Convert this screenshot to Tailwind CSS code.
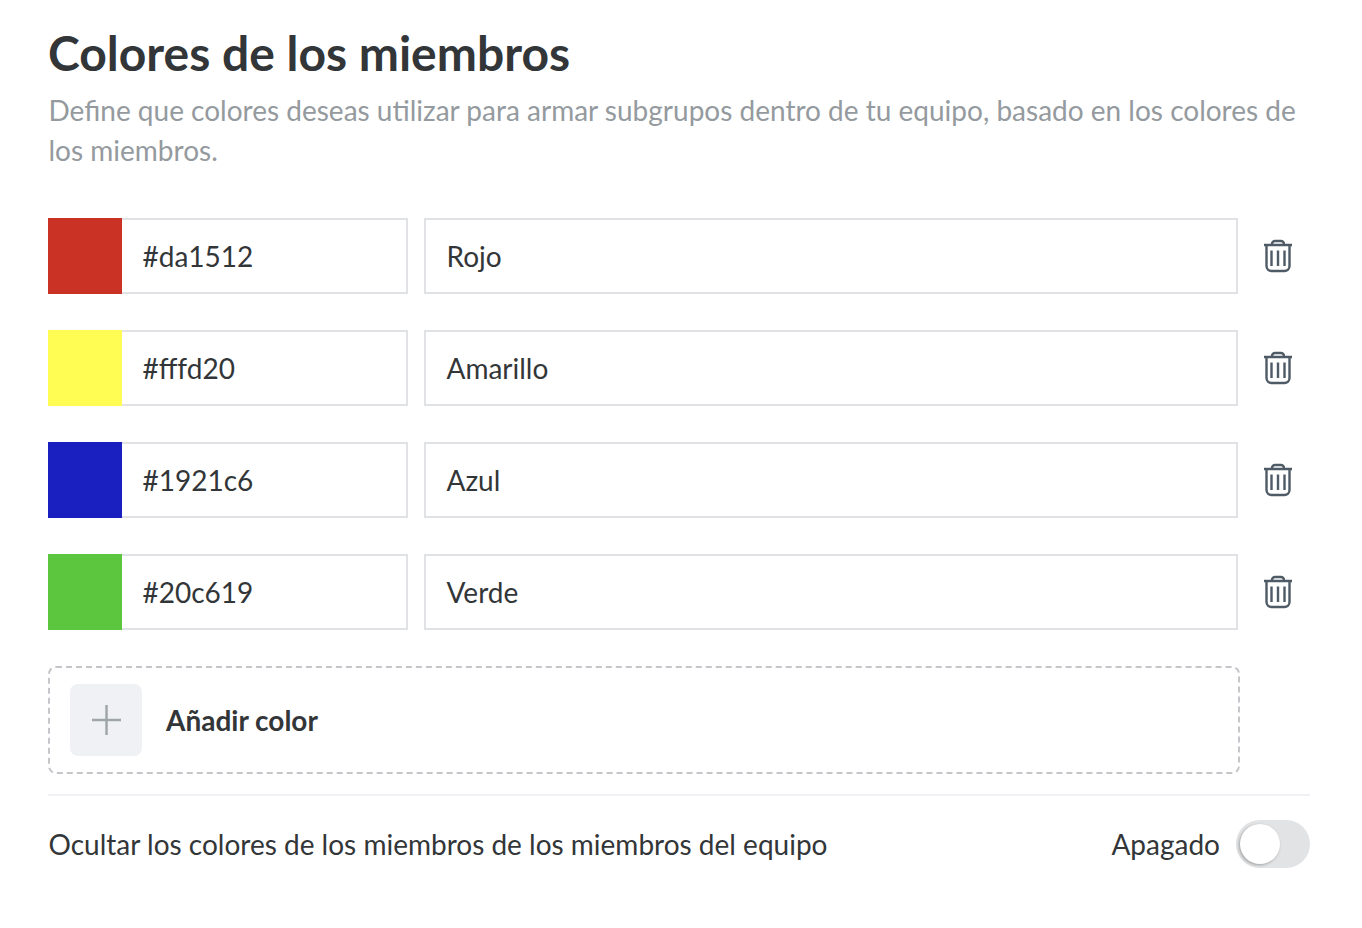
<!DOCTYPE html>
<html lang="es">

<head>
    <meta charset="UTF-8">
    <title>Colores de los miembros</title>
    <script src="https://cdn.jsdelivr.net/npm/@tailwindcss/browser@4"></script>
</head>

<body class="bg-white font-['Lato',sans-serif] text-[#333638]">
    <div class="w-[1362px] h-[928px] pl-[48px] pr-[52px] pt-[23px]">
        <h1 class="text-[48px] leading-[60px] font-bold">Colores de los miembros</h1>
        <p class="mt-[7px] pl-[0.5px] text-[28px] leading-[40px] text-[#949a9e]">Define que colores deseas utilizar para armar subgrupos dentro de tu equipo, basado en los colores de los miembros.</p>

        <div class="mt-[48px] flex flex-col gap-[36px]">
            <!-- Rojo -->
            <div class="flex items-center h-[76px]">
                <div class="w-[74px] h-[76px] bg-[#c93225]"></div>
                <div class="w-[286px] h-[76px] flex items-center pl-[20.5px] text-[28px] border-2 border-l-0 border-[#e1e2e6]">#da1512</div>
                <div class="ml-[16px] w-[814px] h-[76px] flex items-center pl-[20.5px] text-[28px] border-2 border-[#e1e2e6]">Rojo</div>
                <svg class="ml-[25px]" width="30" height="34" viewBox="0 0 30 34" fill="none" stroke="#4e5b66" stroke-width="2.400"><path d="M1 6h28M9 5.500V5a3 3 0 0 1 3-3h6a3 3 0 0 1 3 3v.5M3.500 6.500V27a5 5 0 0 0 5 5h13a5 5 0 0 0 5-5V6.500M8.500 11.500V27M15 11.500V27M21.500 11.500V27"/></svg>
            </div>
            <!-- Amarillo -->
            <div class="flex items-center h-[76px]">
                <div class="w-[74px] h-[76px] bg-[#fffd54]"></div>
                <div class="w-[286px] h-[76px] flex items-center pl-[20.5px] text-[28px] border-2 border-l-0 border-[#e1e2e6]">#fffd20</div>
                <div class="ml-[16px] w-[814px] h-[76px] flex items-center pl-[20.5px] text-[28px] border-2 border-[#e1e2e6]">Amarillo</div>
                <svg class="ml-[25px]" width="30" height="34" viewBox="0 0 30 34" fill="none" stroke="#4e5b66" stroke-width="2.400"><path d="M1 6h28M9 5.500V5a3 3 0 0 1 3-3h6a3 3 0 0 1 3 3v.5M3.500 6.500V27a5 5 0 0 0 5 5h13a5 5 0 0 0 5-5V6.500M8.500 11.500V27M15 11.500V27M21.500 11.500V27"/></svg>
            </div>
            <!-- Azul -->
            <div class="flex items-center h-[76px]">
                <div class="w-[74px] h-[76px] bg-[#1a20c0]"></div>
                <div class="w-[286px] h-[76px] flex items-center pl-[20.5px] text-[28px] border-2 border-l-0 border-[#e1e2e6]">#1921c6</div>
                <div class="ml-[16px] w-[814px] h-[76px] flex items-center pl-[20.5px] text-[28px] border-2 border-[#e1e2e6]">Azul</div>
                <svg class="ml-[25px]" width="30" height="34" viewBox="0 0 30 34" fill="none" stroke="#4e5b66" stroke-width="2.400"><path d="M1 6h28M9 5.500V5a3 3 0 0 1 3-3h6a3 3 0 0 1 3 3v.5M3.500 6.500V27a5 5 0 0 0 5 5h13a5 5 0 0 0 5-5V6.500M8.500 11.500V27M15 11.500V27M21.500 11.500V27"/></svg>
            </div>
            <!-- Verde -->
            <div class="flex items-center h-[76px]">
                <div class="w-[74px] h-[76px] bg-[#5cc63f]"></div>
                <div class="w-[286px] h-[76px] flex items-center pl-[20.5px] text-[28px] border-2 border-l-0 border-[#e1e2e6]">#20c619</div>
                <div class="ml-[16px] w-[814px] h-[76px] flex items-center pl-[20.5px] text-[28px] border-2 border-[#e1e2e6]">Verde</div>
                <svg class="ml-[25px]" width="30" height="34" viewBox="0 0 30 34" fill="none" stroke="#4e5b66" stroke-width="2.400"><path d="M1 6h28M9 5.500V5a3 3 0 0 1 3-3h6a3 3 0 0 1 3 3v.5M3.500 6.500V27a5 5 0 0 0 5 5h13a5 5 0 0 0 5-5V6.500M8.500 11.500V27M15 11.500V27M21.500 11.500V27"/></svg>
            </div>
        </div>

        <!-- Add color -->
        <div class="mt-[36px] w-[1192px] h-[108px] flex items-center pl-[20px] border-2 border-dashed border-[#c4c6ca] rounded-[8px]">
            <div class="w-[72px] h-[72px] rounded-[8px] bg-[#f0f1f5] flex items-center justify-center">
                <svg width="30" height="30" viewBox="0 0 30 30" fill="none" stroke="#9fa6a9" stroke-width="2.500"><path d="M15.500 0v30M1 15h29"/></svg>
            </div>
            <span class="ml-[24px] text-[28px] font-bold">Añadir color</span>
        </div>

        <div class="mt-[20px] h-[2px] bg-[#f1f1f5]"></div>

        <div class="mt-[24px] flex items-center justify-between h-[48px]">
            <span class="pl-[0.5px] text-[28px]">Ocultar los colores de los miembros de los miembros del equipo</span>
            <div class="flex items-center">
                <span class="text-[28px]">Apagado</span>
                <div class="ml-[16px] w-[74px] h-[48px] rounded-full bg-[#e2e3e5] p-[4px]">
                    <div class="w-[40px] h-[40px] rounded-full bg-white shadow-[-1px_1px_3px_rgba(0,0,0,0.3)]"></div>
                </div>
            </div>
        </div>
    </div>
</body>

</html>
